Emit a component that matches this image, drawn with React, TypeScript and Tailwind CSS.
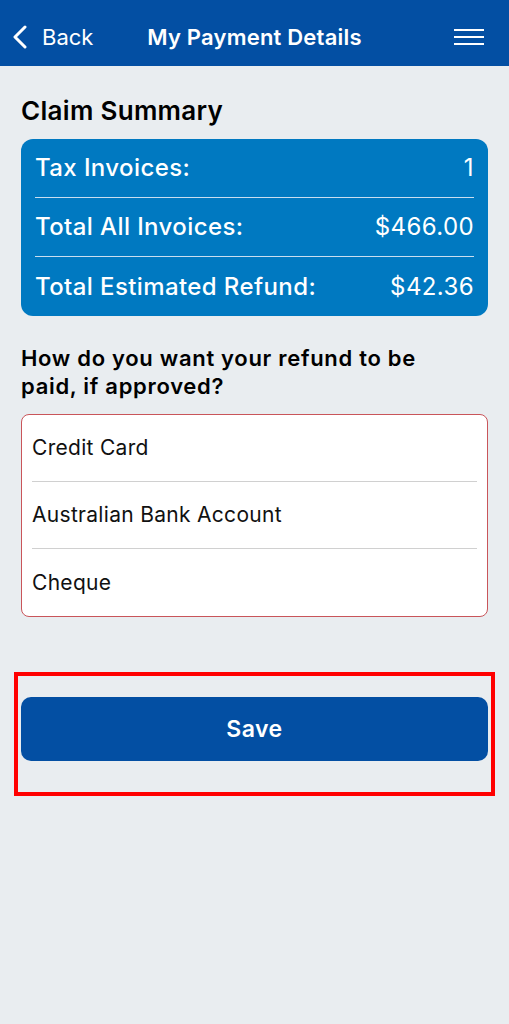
import React from "react";

export default function App() {
  const rows = [
    ["Tax Invoices:", "1"],
    ["Total All Invoices:", "$466.00"],
    ["Total Estimated Refund:", "$42.36"],
  ];
  const options = ["Credit Card", "Australian Bank Account", "Cheque"];
  return (
    <div
      className="w-[509px] h-[1024px] bg-[#e9edf0] flex flex-col"
      style={{ fontFamily: "Inter, 'Noto Sans', sans-serif" }}
    >
      <header className="h-[66px] bg-[#034fa3] grid grid-cols-[1fr_auto_1fr] items-center pt-[8px] px-[12px] text-white">
        <div className="flex items-center gap-[14px]">
          <svg width="16" height="24" viewBox="0 0 16 24" fill="none">
            <path d="M13 2 L3 12 L13 22" stroke="white" strokeWidth="3" strokeLinecap="round" strokeLinejoin="round" />
          </svg>
          <span className="text-[22px] font-normal">Back</span>
        </div>
        <div className="text-center text-[22px] font-semibold tracking-[0.2px]">My Payment Details</div>
        <div className="flex justify-end pr-[13px]">
          <svg width="30" height="18" viewBox="0 0 30 18">
            <rect x="0" y="1" width="30" height="2" fill="white" />
            <rect x="0" y="8" width="30" height="2" fill="white" />
            <rect x="0" y="15" width="30" height="2" fill="white" />
          </svg>
        </div>
      </header>

      <div className="px-[21px] pt-[28px] flex flex-col">
        <h1 className="text-[26px] font-semibold text-black leading-[34px] tracking-[0.3px]">Claim Summary</h1>
        <div className="mt-[11px] bg-[#0079c1] rounded-[12px] px-[14px] flex flex-col">
          {rows.map(([l, v], i) => (
            <div
              key={l}
              className={`h-[59px] flex items-center justify-between text-white text-[24px] tracking-[0.4px] ${i < 2 ? "border-b border-[#c9def0]" : ""}`}
            >
              <span className="font-medium">{l}</span>
              <span className="font-normal">{v}</span>
            </div>
          ))}
        </div>

        <p className="mt-[28px] text-[22px] font-semibold text-black leading-[28px] tracking-[0.7px]">
          How do you want your refund to be
          <br />
          paid, if approved?
        </p>

        <div className="mt-[14px] bg-white border-[1.5px] border-[#c9555a] rounded-[8px] px-[10px] flex flex-col">
          {options.map((o, i) => (
            <div
              key={o}
              className={`h-[67px] flex items-center text-[21px] tracking-[0.3px] text-[#111] ${i < 2 ? "border-b-[1.5px] border-[#d0d0d0]" : ""}`}
            >
              {o}
            </div>
          ))}
        </div>
      </div>

      <div className="mt-[55px] mx-[14px] border-4 border-[#ff0000] px-[3px] pt-[21px] pb-[31px]">
        <button className="w-full h-[64px] bg-[#034fa3] rounded-[10px] text-white text-[23px] font-semibold tracking-[0.5px]">
          Save
        </button>
      </div>
    </div>
  );
}
